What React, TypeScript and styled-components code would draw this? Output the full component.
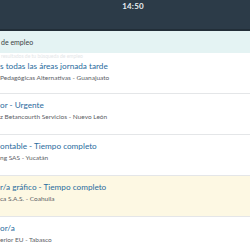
import styled, { createGlobalStyle } from 'styled-components';

const GlobalStyle = createGlobalStyle`
  html, body {
    margin: 0;
    padding: 0;
    background: #ffffff;
    font-family: Lato, "Open Sans", sans-serif;
    overflow: hidden;
  }
`;

const Screen = styled.div`
  width: 250px;
  height: 250px;
  display: flex;
  flex-direction: column;
  overflow: hidden;
`;

const StatusBar = styled.div`
  height: 31px;
  background: #2c3b48;
  border-bottom: 2px solid #222e38;
  display: flex;
  justify-content: center;
  align-items: flex-start;
  padding-left: 16px;
  padding-top: 1px;
  box-sizing: border-box;
  flex-shrink: 0;
`;

const Clock = styled.span`
  color: #e8edf1;
  font-size: 8px;
  font-weight: 700;
  line-height: 10px;
  letter-spacing: 0.2px;
`;

const SectionHeader = styled.div`
  height: 22px;
  background: #e4f3f3;
  display: flex;
  align-items: center;
  padding-left: 1px;
  font-size: 7px;
  color: #3a3f44;
  flex-shrink: 0;
`;

const Hint = styled.div`
  height: 6px;
  font-size: 5px;
  line-height: 6px;
  color: #e4e6e8;
  padding-left: 1px;
  white-space: nowrap;
  overflow: hidden;
  flex-shrink: 0;
`;

const Row = styled.div<{ $highlight?: boolean; $compact?: boolean }>`
  height: ${({ $compact }) => ($compact ? '35px' : '41px')};
  box-sizing: border-box;
  padding-top: ${({ $compact }) => ($compact ? '1px' : '5px')};
  background: ${({ $highlight }) => ($highlight ? '#fdf8e3' : '#ffffff')};
  border-bottom: 1px solid #e4e6e8;
  display: flex;
  flex-direction: column;
  gap: 1px;
  flex-shrink: 0;
  white-space: nowrap;
  overflow: hidden;
`;

const Title = styled.div`
  color: #2a6c9e;
  font-size: 8.2px;
  font-weight: 400;
  line-height: 12px;
`;

const Meta = styled.div`
  color: #5c6166;
  font-size: 6.5px;
  line-height: 10px;
`;

const jobs = [
  { title: 's todas las áreas jornada tarde', meta: 'Pedagógicas Alternativas - Guanajuato' },
  { title: 'or - Urgente', meta: 'z Betancourth Servicios - Nuevo León' },
  { title: 'ontable - Tiempo completo', meta: 'ng SAS - Yucatán' },
  { title: 'r/a gráfico - Tiempo completo', meta: 'ca S.A.S. - Coahuila', highlight: true },
  { title: 'or/a', meta: 'erior EU - Tabasco' },
];

export default function App() {
  return (
    <Screen>
      <GlobalStyle />
      <StatusBar>
        <Clock>14:50</Clock>
      </StatusBar>
      <SectionHeader>de empleo</SectionHeader>
      <Hint>resultados de tu búsqueda de empleo</Hint>
      {jobs.map((job, i) => (
        <Row key={job.title} $highlight={job.highlight} $compact={i === 0}>
          <Title>{job.title}</Title>
          <Meta>{job.meta}</Meta>
        </Row>
      ))}
    </Screen>
  );
}
